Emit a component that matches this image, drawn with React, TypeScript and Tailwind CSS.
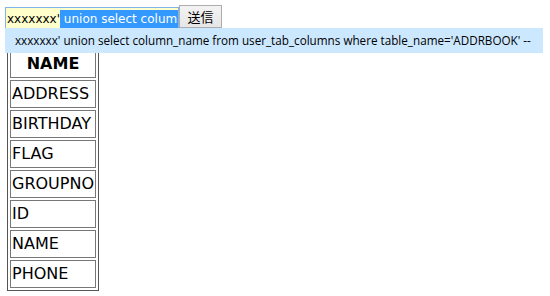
import React from "react";

const Columns = ["ADDRESS", "BIRTHDAY", "FLAG", "GROUPNO", "ID", "NAME", "PHONE"];

const query = "xxxxxxx' union select column_name from user_tab_columns where table_name='ADDRBOOK' --";

function App() {
    return (
        <div className="relative w-[550px] h-[296px] overflow-hidden bg-white text-black font-['DejaVu_Sans',sans-serif]">
            <div className="flex items-start h-[30px] pl-[5px] pt-[5px]">
                <div className="mt-[2px] w-[174px] h-[23px] flex items-center overflow-hidden whitespace-nowrap border border-[#7eb4ea] bg-[#ffffcc] pl-[1px] text-[12px]">
                    <span className="shrink-0">xxxxxxx'</span>
                    <span className="min-w-0 overflow-hidden bg-[#3399ff] text-white">&nbsp;union select column_name</span>
                </div>
                <button className="w-[43px] h-[23px] flex items-center justify-center border border-[#adadad] bg-gradient-to-b from-[#f3f3f3] to-[#e6e6e6] text-[13px] leading-[16px] font-['Noto_Sans_CJK_JP',sans-serif]">
                    送信
                </button>
            </div>

            <table className="ml-[7px] mt-[17px] border-separate border-spacing-[2px] border border-[#555]">
                <thead>
                    <tr>
                        <th className="w-[86px] h-[28px] p-0 border border-[#777] text-center align-middle text-[16px] font-bold">
                            NAME
                        </th>
                    </tr>
                </thead>
                <tbody>
                    {Columns.map((c) => (
                        <tr key={c}>
                            <td className="w-[86px] h-[28px] p-0 pl-[1px] border border-[#777] text-left align-middle text-[16px]">
                                {c}
                            </td>
                        </tr>
                    ))}
                </tbody>
            </table>

            <div className="absolute left-[5px] top-[28px] w-[538px] h-[25px] flex items-center bg-[#cce8ff] pl-[10px] text-[11.7px] whitespace-nowrap font-['Open_Sans',sans-serif]">
                {query}
            </div>
        </div>
    );
}

export default App;
